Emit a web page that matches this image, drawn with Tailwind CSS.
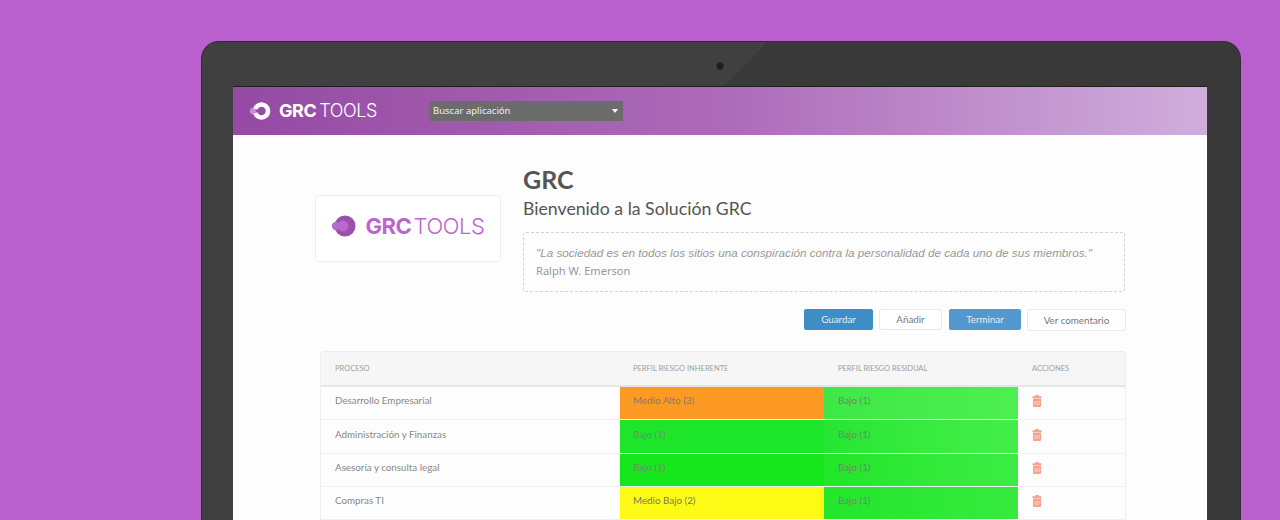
<!DOCTYPE html>
<html lang="en">
<head>
    <meta charset="UTF-8">
    <title>GRC Tools</title>
    <script src="https://cdn.jsdelivr.net/npm/@tailwindcss/browser@4"></script>
</head>
<body class="bg-[#b95fce] h-[520px] overflow-hidden font-['Lato',sans-serif]">
    <!-- Laptop -->
    <div class="relative ml-[201px] mt-[41px] w-[1040px] h-[479px] float-left rounded-t-[18px] bg-[#393939] border border-[#2e2e2e] border-b-0 pt-[44px] pl-[31px] pr-[33px] overflow-hidden">
        <svg class="absolute left-0 top-0" width="570" height="479"><polygon points="0,0 565,0 520,46 100,479 0,479" fill="#404040"/></svg>
        <div class="absolute left-[514px] top-[20px] w-2 h-2 rounded-full bg-[#1c1c1c] border border-[#2b2b2b]"></div>

        <!-- Screen -->
        <div class="relative h-[435px] bg-[#fdfdfd] border-t border-[#1f1f1f] overflow-hidden">
            <!-- Header -->
            <header class="h-[48px] flex items-center bg-linear-to-r from-[#954aa3] via-[#ac6ab8] to-[#d0aedc]">
                <div class="w-[196px] pl-[16px] flex items-center">
                    <svg width="22" height="20" viewBox="0 0 22 20" class="shrink-0">
                        <circle cx="4" cy="10" r="3.2" fill="#c78fd6"/>
                        <path d="M6.32 8A6.5 6.5 0 1 1 6.32 12" fill="none" stroke="#fff" stroke-width="4.5"/>
                    </svg>
                    <span class="ml-[8px] text-[18px] leading-none text-white whitespace-nowrap font-['Inter',sans-serif] tracking-[-0.45px]"><span class="font-bold">GRC</span><span class="font-light ml-[3px]">TOOLS</span></span>
                </div>
                <div class="w-[194px] h-[20px] bg-[#6c6c6c] flex items-center justify-between pl-[4px] pr-[5px]">
                    <span class="pt-[1px] text-[9.5px] text-[#f0f0f0] font-['Noto_Sans',sans-serif]">Buscar aplicación</span>
                    <span class="w-0 h-0 border-x-[3px] border-x-transparent border-t-[4px] border-t-white"></span>
                </div>
            </header>

            <!-- Intro -->
            <section class="flex pl-[82px] pr-[82px]">
                <div class="w-[186px] h-[67px] mt-[60px] mr-[22px] pb-[5px] bg-white border border-[#eeeeee] rounded-[3px] flex items-center justify-center shrink-0">
                    <svg width="28" height="22" viewBox="0 0 28 22" class="shrink-0">
                        <circle cx="14" cy="11" r="10.5" fill="#9b4fab"/>
                        <circle cx="12" cy="11" r="5.5" fill="#b66ac9"/>
                        <circle cx="5" cy="11" r="4.2" fill="#b66ac9"/>
                    </svg>
                    <span class="ml-[6px] text-[22px] leading-none text-[#bb66cf] whitespace-nowrap font-['Inter',sans-serif] tracking-[-0.4px]"><span class="font-bold">GRC</span><span class="font-light ml-[2px]">TOOLS</span></span>
                </div>
                <div class="flex-1">
                    <h1 class="mt-[28px] text-[25px] leading-[32px] font-bold text-[#555555]">GRC</h1>
                    <h2 class="mt-[2px] text-[17.7px] leading-[24px] text-[#555555]">Bienvenido a la Solución GRC</h2>
                    <div class="mt-[11px] h-[60px] border border-dashed border-[#d2d2d2] rounded-[3px] pl-[12px] pt-[12px]">
                        <p class="text-[11.7px] leading-[16px] italic text-[#999999] font-['Liberation_Sans',sans-serif] whitespace-nowrap">"La sociedad es en todos los sitios una conspiración contra la personalidad de cada uno de sus miembros."</p>
                        <p class="mt-[2px] text-[11.1px] leading-[16px] text-[#999999] font-['Noto_Sans',sans-serif]">Ralph W. Emerson</p>
                    </div>
                </div>
            </section>

            <!-- Buttons -->
            <div class="mt-[17px] pr-[81px] flex justify-end gap-[6px] text-[9.8px]">
                <button class="w-[69px] h-[21px] rounded-[2px] bg-[#3f8dc6] text-[#e4eff7]">Guardar</button>
                <button class="w-[63px] h-[21px] rounded-[3px] bg-white border border-[#e8e8e8] text-[#777777]">Añadir</button>
                <button class="ml-[1px] w-[72px] h-[21px] rounded-[2px] bg-[#5399cd] text-[#e4eff7]">Terminar</button>
                <button class="w-[99px] h-[22px] rounded-[3px] bg-white border border-[#e8e8e8] text-[#777777]">Ver comentario</button>
            </div>

            <!-- Table -->
            <div class="ml-[87px] mt-[20px] w-[806px] rounded-t-[4px] border border-b-0 border-[#eeeeee] overflow-hidden">
                <table class="w-full table-fixed border-collapse">
                    <colgroup>
                        <col class="w-[299px]"><col class="w-[204px]"><col class="w-[194px]"><col>
                    </colgroup>
                    <thead>
                        <tr class="h-[34px] bg-[#f6f6f6] border-b-2 border-[#e6e6e6] text-[7.5px] text-left uppercase text-[#a0a0a0]">
                            <th class="font-normal pl-[14px]">Proceso</th>
                            <th class="font-normal pl-[13px]">Perfil riesgo inherente</th>
                            <th class="font-normal pl-[14px]">Perfil riesgo residual</th>
                            <th class="font-normal pl-[14px]">Acciones</th>
                        </tr>
                    </thead>
                    <tbody class="text-[9.8px] text-[#888888]">
                        <tr class="h-[33px] border-b border-[#efefef]">
                            <td class="pl-[14px] pb-[4px]">Desarrollo Empresarial</td>
                            <td class="pl-[13px] pb-[4px] bg-[#fd9a24] text-[#7d7a6e]">Medio Alto (3)</td>
                            <td class="pl-[14px] pb-[4px] bg-linear-to-r from-[#3de846] to-[#4df050] text-[#6b8a68]">Bajo (1)</td>
                            <td class="pl-[14px] pb-[3px]"><svg width="10" height="12" viewBox="0 0 10 12"><path fill="#f9a08e" d="M3.5 0h3l.5 1.2h2.5V3H.5V1.2H3zM1 3.6h8V11a1 1 0 0 1-1 1H2a1 1 0 0 1-1-1z"/><path stroke="#fde0d8" stroke-width=".8" d="M3 6v4M5 6v4M7 6v4"/></svg></td>
                        </tr>
                        <tr class="h-[34px] border-b border-[#efefef]">
                            <td class="pl-[14px] pb-[4px]">Administración y Finanzas</td>
                            <td class="pl-[13px] pb-[4px] bg-[#1de62a] text-[#6a8f6a]">Bajo (1)</td>
                            <td class="pl-[14px] pb-[4px] bg-linear-to-r from-[#26e632] to-[#44ee4a] text-[#6b8a68]">Bajo (1)</td>
                            <td class="pl-[14px] pb-[3px]"><svg width="10" height="12" viewBox="0 0 10 12"><path fill="#f9a08e" d="M3.5 0h3l.5 1.2h2.5V3H.5V1.2H3zM1 3.6h8V11a1 1 0 0 1-1 1H2a1 1 0 0 1-1-1z"/><path stroke="#fde0d8" stroke-width=".8" d="M3 6v4M5 6v4M7 6v4"/></svg></td>
                        </tr>
                        <tr class="h-[33px] border-b border-[#efefef]">
                            <td class="pl-[14px] pb-[4px]">Asesoría y consulta legal</td>
                            <td class="pl-[13px] pb-[4px] bg-[#16e61c] text-[#6a8f6a]">Bajo (1)</td>
                            <td class="pl-[14px] pb-[4px] bg-linear-to-r from-[#20e628] to-[#3cec44] text-[#6b8a68]">Bajo (1)</td>
                            <td class="pl-[14px] pb-[3px]"><svg width="10" height="12" viewBox="0 0 10 12"><path fill="#f9a08e" d="M3.5 0h3l.5 1.2h2.5V3H.5V1.2H3zM1 3.6h8V11a1 1 0 0 1-1 1H2a1 1 0 0 1-1-1z"/><path stroke="#fde0d8" stroke-width=".8" d="M3 6v4M5 6v4M7 6v4"/></svg></td>
                        </tr>
                        <tr class="h-[33px] border-b border-[#efefef]">
                            <td class="pl-[14px] pb-[4px]">Compras TI</td>
                            <td class="pl-[13px] pb-[4px] bg-[#fdfb16] text-[#777766]">Medio Bajo (2)</td>
                            <td class="pl-[14px] pb-[4px] bg-linear-to-r from-[#22e62c] to-[#36ea3e] text-[#6b8a68]">Bajo (1)</td>
                            <td class="pl-[14px] pb-[3px]"><svg width="10" height="12" viewBox="0 0 10 12"><path fill="#f9a08e" d="M3.5 0h3l.5 1.2h2.5V3H.5V1.2H3zM1 3.6h8V11a1 1 0 0 1-1 1H2a1 1 0 0 1-1-1z"/><path stroke="#fde0d8" stroke-width=".8" d="M3 6v4M5 6v4M7 6v4"/></svg></td>
                        </tr>
                    </tbody>
                </table>
            </div>
        </div>
    </div>
</body>
</html>
